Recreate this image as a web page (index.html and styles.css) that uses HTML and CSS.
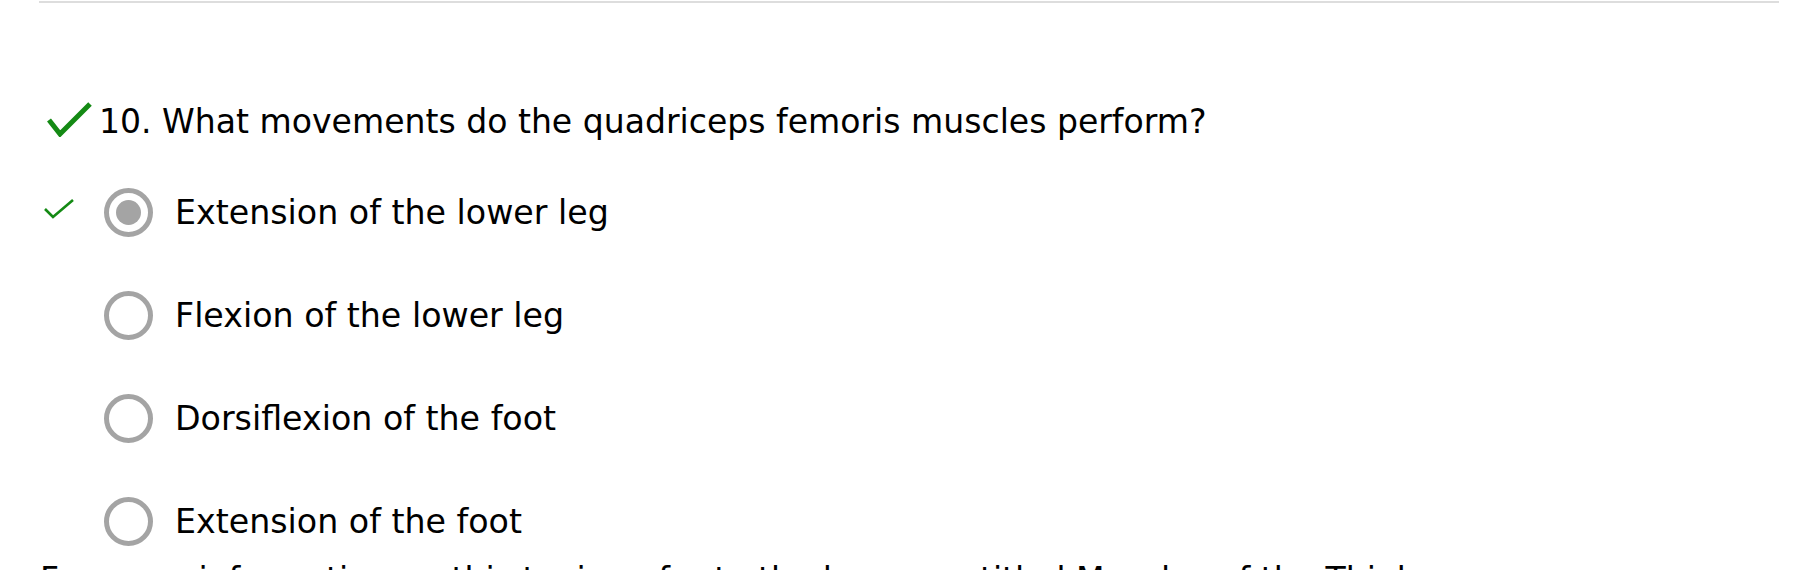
FILE: index.html
```html
<!DOCTYPE html>
<html lang="en">
<head>
<meta charset="utf-8">
<title>Quiz result</title>
<link rel="stylesheet" href="styles.css">
</head>
<body>
<div class="page">
  <div class="divider"></div>
  <div class="question">
    <svg class="q-check" width="46" height="35" viewBox="0 0 46 35" aria-hidden="true">
      <path d="M3 18 L14 32 L44 2" fill="none" stroke="#148a14" stroke-width="5"/>
    </svg>
    <span class="q-text">10. What movements do the quadriceps femoris muscles perform?</span>
  </div>
  <ul class="options">
    <li class="option">
      <span class="mark">
        <svg width="30" height="22" viewBox="0 0 30 22" aria-hidden="true">
          <path d="M1 11 L9 19 L29 2" fill="none" stroke="#148a14" stroke-width="2.6"/>
        </svg>
      </span>
      <span class="radio checked"></span>
      <span class="label">Extension of the lower leg</span>
    </li>
    <li class="option">
      <span class="mark"></span>
      <span class="radio"></span>
      <span class="label">Flexion of the lower leg</span>
    </li>
    <li class="option">
      <span class="mark"></span>
      <span class="radio"></span>
      <span class="label">Dorsiflexion of the foot</span>
    </li>
    <li class="option">
      <span class="mark"></span>
      <span class="radio"></span>
      <span class="label">Extension of the foot</span>
    </li>
  </ul>
  <p class="explain">For more information on this topic, refer to the lesson entitled Muscles of the Thigh.</p>
</div>
</body>
</html>
```

FILE: styles.css
```css
html, body {
  margin: 0;
  padding: 0;
  background: #ffffff;
}

body {
  font-family: "DejaVu Sans", Verdana, sans-serif;
  color: #000000;
  overflow: hidden;
}

.page {
  width: 1740px;
  margin-left: 39px;
  padding-top: 1px;
}

.divider {
  height: 2px;
  background: #dddddd;
}

.question {
  display: flex;
  align-items: center;
  margin-top: 99px;
  height: 40px;
  padding-left: 7px;
}

.q-check {
  flex: none;
  margin-right: 7px;
  margin-top: -6px;
}

.q-text {
  font-size: 33.1px;
  line-height: 40px;
  white-space: nowrap;
}

.options {
  list-style: none;
  margin: 45px 0 0 0;
  padding: 0;
  display: flex;
  flex-direction: column;
  gap: 53px;
}

.option {
  display: flex;
  align-items: center;
  height: 50px;
}

.mark {
  flex: none;
  width: 65px;
  padding-left: 5px;
  box-sizing: border-box;
  display: flex;
  align-items: center;
  margin-top: -6px;
}

.radio {
  flex: none;
  width: 49px;
  height: 49px;
  box-sizing: border-box;
  border: 5px solid #a4a4a4;
  border-radius: 50%;
  display: flex;
  align-items: center;
  justify-content: center;
  margin-right: 22px;
}

.radio.checked::after {
  content: "";
  width: 25px;
  height: 25px;
  border-radius: 50%;
  background: #a4a4a4;
}

.label {
  font-size: 33.25px;
  line-height: 40px;
  white-space: nowrap;
  padding-top: 2px;
}

.explain {
  margin: 14px 0 0 1px;
  font-size: 33.1px;
  line-height: 40px;
  white-space: nowrap;
}
```
